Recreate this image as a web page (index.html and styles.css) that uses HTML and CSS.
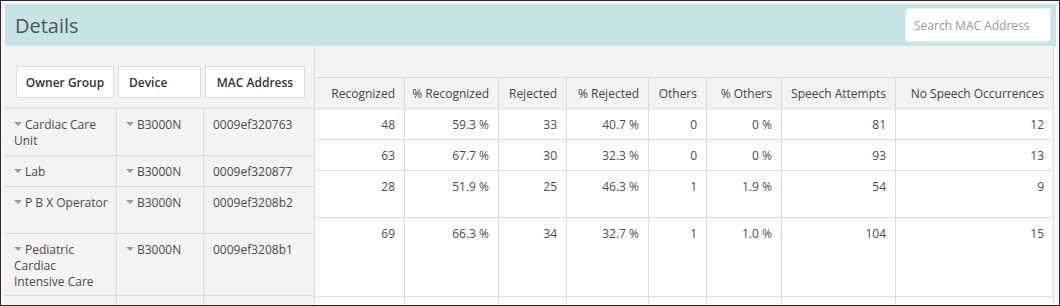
FILE: index.html
```html
<!DOCTYPE html>
<html>
<head>
<meta charset="utf-8">
<link rel="stylesheet" href="styles.css">
</head>
<body>
<div class="frame">
  <div class="panel">
    <div class="head">
      <h1 class="title">Details</h1>
      <input class="search" type="text" placeholder="Search MAC Address">
    </div>
    <div class="body">
      <div class="frozen">
        <div class="fhead">
          <div class="hbox w1">Owner Group</div>
          <div class="hbox w2">Device</div>
          <div class="hbox w3">MAC Address</div>
        </div>
        <div class="fgrid">
          <div class="fc"><span class="caret"></span>Cardiac Care Unit</div>
          <div class="fc"><span class="caret"></span>B3000N</div>
          <div class="fc">0009ef320763</div>

          <div class="fc"><span class="caret"></span>Lab</div>
          <div class="fc"><span class="caret"></span>B3000N</div>
          <div class="fc">0009ef320877</div>

          <div class="fc"><span class="caret"></span>P B X Operator</div>
          <div class="fc"><span class="caret"></span>B3000N</div>
          <div class="fc">0009ef3208b2</div>

          <div class="fc"><span class="caret"></span>Pediatric Cardiac Intensive Care</div>
          <div class="fc"><span class="caret"></span>B3000N</div>
          <div class="fc">0009ef3208b1</div>

          <div class="fc"></div>
          <div class="fc"></div>
          <div class="fc"></div>
        </div>
      </div>
      <div class="main">
        <div class="band"></div>
        <div class="mgrid">
          <div class="th">Recognized</div>
          <div class="th">% Recognized</div>
          <div class="th">Rejected</div>
          <div class="th">% Rejected</div>
          <div class="th">Others</div>
          <div class="th">% Others</div>
          <div class="th">Speech Attempts</div>
          <div class="th">No Speech Occurrences</div>

          <div class="td">48</div><div class="td">59.3 %</div><div class="td">33</div><div class="td">40.7 %</div><div class="td">0</div><div class="td">0 %</div><div class="td">81</div><div class="td">12</div>
          <div class="td">63</div><div class="td">67.7 %</div><div class="td">30</div><div class="td">32.3 %</div><div class="td">0</div><div class="td">0 %</div><div class="td">93</div><div class="td">13</div>
          <div class="td">28</div><div class="td">51.9 %</div><div class="td">25</div><div class="td">46.3 %</div><div class="td">1</div><div class="td">1.9 %</div><div class="td">54</div><div class="td">9</div>
          <div class="td">69</div><div class="td">66.3 %</div><div class="td">34</div><div class="td">32.7 %</div><div class="td">1</div><div class="td">1.0 %</div><div class="td">104</div><div class="td">15</div>
          <div class="td"></div><div class="td"></div><div class="td"></div><div class="td"></div><div class="td"></div><div class="td"></div><div class="td"></div><div class="td"></div>
        </div>
      </div>
    </div>
  </div>
</div>
</body>
</html>
```

FILE: styles.css
```css
* { box-sizing: border-box; }
html, body { margin: 0; padding: 0; background: #ffffff; }
body { font-family: "Open Sans", "Noto Sans", sans-serif; font-size: 12px; color: #4a4a4a; }

.frame {
  width: 1060px;
  height: 306px;
  border: 1px solid #2a2a2a;
  padding: 3px 3px 0 4px;
  background: #f6f6f6;
  overflow: hidden;
}
.panel {
  width: 1051px;
  height: 100%;
  background: #fbfbfb;
}
.head {
  height: 42px;
  background: #c6e3e6;
  display: flex;
  align-items: center;
  justify-content: space-between;
  padding: 0 5px 0 10px;
}
.title {
  margin: 0;
  font-size: 20px;
  font-weight: normal;
  color: #505558;
}
.search {
  width: 146px;
  height: 34px;
  border: 1px solid #e2eef0;
  border-radius: 3px;
  background: #ffffff;
  padding: 0 8px;
  font-family: inherit;
  font-size: 12px;
  color: #555;
  outline: none;
}
.search::placeholder { color: #9a9a9a; }

.body { display: flex; align-items: flex-start; }

.frozen {
  width: 310px;
  background: #f4f3f2;
}
.fhead {
  height: 63px;
  display: flex;
  gap: 4px;
  padding: 20px 0 0 11px;
  border-bottom: 1px solid #dddcdb;
  border-right: 1px solid #dddcdb;
}
.hbox {
  height: 32px;
  background: #ffffff;
  border: 1px solid #dcdcdc;
  font-weight: 600;
  color: #333;
  display: flex;
  align-items: center;
  justify-content: center;
}
.w1 { width: 98px; }
.w2 { width: 83px; justify-content: flex-start; padding-left: 10px; }
.w3 { width: 100px; }

.fgrid {
  display: grid;
  grid-template-columns: 112px 87px 111px;
  grid-template-rows: 47px 31px 47px 62px 40px;
}
.fc {
  border-right: 1px solid #dddcdb;
  border-bottom: 1px solid #dddcdb;
  padding: 8px 8px 0 9px;
  line-height: 16px;
  color: #4a4a4a;
}
.caret {
  display: inline-block;
  width: 0;
  height: 0;
  border-left: 4px solid transparent;
  border-right: 4px solid transparent;
  border-top: 4px solid #9a9a9a;
  margin-right: 3px;
  vertical-align: 3px;
}

.main { width: 739px; }
.band {
  height: 32px;
  background: #f4f3f2;
  border-bottom: 1px solid #dddcdb;
  border-right: 1px solid #dddcdb;
}
.mgrid {
  display: grid;
  grid-template-columns: 90px 94px 68px 82px 58px 75px 114px 158px;
  grid-template-rows: 31px 31px 31px 47px 79px 40px;
}
.th, .td {
  border-right: 1px solid #dddcdb;
  border-bottom: 1px solid #dddcdb;
  text-align: right;
  padding-right: 9px;
  white-space: nowrap;
}
.th {
  background: #f4f3f2;
  color: #444;
  display: flex;
  align-items: center;
  justify-content: flex-end;
}
.td {
  background: #ffffff;
  padding-top: 8px;
  line-height: 16px;
  color: #4d4d4d;
}
```
